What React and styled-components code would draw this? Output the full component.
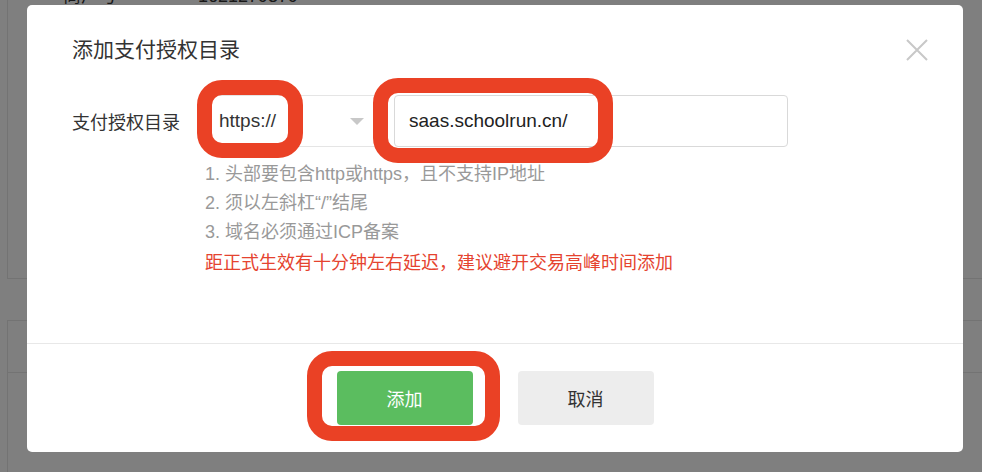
import styled, { createGlobalStyle } from 'styled-components';

const GlobalStyle = createGlobalStyle`
  * { box-sizing: border-box; }
  html, body { margin: 0; padding: 0; background: #fff; overflow: hidden; }
  body { font-family: 'Liberation Sans', 'Noto Sans CJK SC', sans-serif; color: #333; }
`;

const Page = styled.div`
  width: 982px;
  height: 472px;
  padding-left: 7px;
  display: flex;
  flex-direction: column;
  gap: 41px;
  overflow: hidden;
`;

const Panel = styled.div`
  flex-shrink: 0;
  margin-top: ${(p) => p.$offset || 0}px;
  margin-right: -40px;
  border: 1px solid #e6e6e6;
  height: ${(p) => p.$height}px;
  background: #fff;
`;

const InfoRow = styled.div`
  display: flex;
  padding: 23px 0 0 55px;
  font-size: 18px;
  line-height: 24px;
  color: #333;
`;

const InfoLabel = styled.span`
  width: 135px;
`;

const TableHead = styled.div`
  height: 52px;
  border-bottom: 1px solid #e6e6e6;
`;

const Overlay = styled.div`
  position: fixed;
  inset: 0;
  background: rgba(0, 0, 0, 0.5);
  padding: 5px 0 0 27px;
  display: flex;
  align-items: flex-start;
`;

const Modal = styled.div`
  width: 936px;
  background: #fff;
  border-radius: 5px;
`;

const Header = styled.div`
  display: flex;
  align-items: center;
  justify-content: space-between;
  padding: 30px 35px 0 45px;
`;

const Title = styled.h2`
  margin: 0;
  font-size: 21px;
  line-height: 30px;
  font-weight: normal;
  color: #333;
`;

const Close = styled.button`
  width: 22px;
  height: 22px;
  padding: 0;
  border: none;
  background: none;
  display: flex;
`;

const Body = styled.div`
  padding: 30px 45px 65px;
`;

const FormRow = styled.div`
  display: flex;
  align-items: center;
`;

const Label = styled.label`
  width: 133px;
  font-size: 18px;
  color: #333;
`;

const Select = styled.div`
  position: relative;
  width: 175px;
  height: 52px;
  border: 1px solid #e5e5e5;
  border-radius: 4px;
  padding: 0 15px 0 13px;
  display: flex;
  align-items: center;
  justify-content: space-between;
  font-size: 19px;
  color: #333;
`;

const Arrow = styled.span`
  width: 0;
  height: 0;
  border-left: 7px solid transparent;
  border-right: 7px solid transparent;
  border-top: 7px solid #c8c8c8;
`;

const InputWrap = styled.div`
  position: relative;
  margin-left: 14px;
`;

const Input = styled.input`
  display: block;
  width: 394px;
  height: 52px;
  border: 1px solid #d9d9d9;
  border-radius: 4px;
  padding: 0 14px;
  font-family: inherit;
  font-size: 19px;
  color: #222;
  outline: none;
`;

const Hints = styled.div`
  margin-top: 13px;
  padding-left: 133px;
  font-size: 18px;
  line-height: 29px;
`;

const Hint = styled.p`
  margin: ${(p) => (p.$warn ? '2px 0 0' : 0)};
  color: ${(p) => (p.$warn ? '#e5432f' : '#999')};
`;

const Footer = styled.div`
  border-top: 1px solid #e8e8e8;
  padding: 27px 0;
  display: flex;
  justify-content: center;
  gap: 45px;
`;

const Button = styled.button`
  position: relative;
  width: 136px;
  height: 54px;
  border: none;
  border-radius: 4px;
  font-family: inherit;
  font-size: 18px;
  background: ${(p) => (p.$primary ? '#5bbd5f' : '#ededed')};
  color: ${(p) => (p.$primary ? '#fff' : '#333')};
`;

const Highlight = styled.span`
  position: absolute;
  top: ${(p) => p.$top}px;
  left: ${(p) => p.$left}px;
  width: ${(p) => p.$w}px;
  height: ${(p) => p.$h}px;
  border: 15px solid #ea4125;
  border-radius: 25px;
  pointer-events: none;
`;

const App = () => (
  <>
    <GlobalStyle />
    <Page>
      <Panel $offset={-40} $height={319}>
        <InfoRow>
          <InfoLabel>商户号</InfoLabel>
          <span>1621279379</span>
        </InfoRow>
      </Panel>
      <Panel $height={200}>
        <TableHead />
      </Panel>
    </Page>
    <Overlay>
      <Modal>
        <Header>
          <Title>添加支付授权目录</Title>
          <Close aria-label='关闭'>
            <svg width='22' height='22' viewBox='0 0 22 22'>
              <path d='M1 1 L21 21 M21 1 L1 21' stroke='#c8c8c8' strokeWidth='2' fill='none' />
            </svg>
          </Close>
        </Header>
        <Body>
          <FormRow>
            <Label>支付授权目录</Label>
            <Select>
              <span>https://</span>
              <Arrow />
              <Highlight $top={-16} $left={-9} $w={106} $h={78} />
            </Select>
            <InputWrap>
              <Input readOnly value='saas.schoolrun.cn/' />
              <Highlight $top={-17} $left={-21} $w={240} $h={85} />
            </InputWrap>
          </FormRow>
          <Hints>
            <Hint>1. 头部要包含http或https，且不支持IP地址</Hint>
            <Hint>2. 须以左斜杠“/”结尾</Hint>
            <Hint>3. 域名必须通过ICP备案</Hint>
            <Hint $warn>距正式生效有十分钟左右延迟，建议避开交易高峰时间添加</Hint>
          </Hints>
        </Body>
        <Footer>
          <Button $primary>
            添加
            <Highlight $top={-20} $left={-30} $w={193} $h={90} />
          </Button>
          <Button>取消</Button>
        </Footer>
      </Modal>
    </Overlay>
  </>
);

export default App;
